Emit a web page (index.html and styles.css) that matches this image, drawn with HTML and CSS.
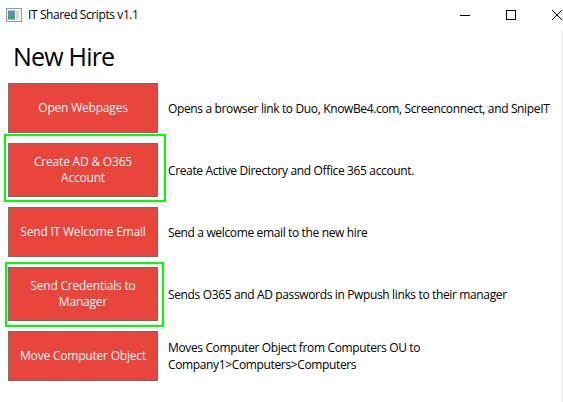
FILE: index.html
```html
<!DOCTYPE html>
<html>
<head>
<meta charset="utf-8">
<link rel="stylesheet" href="styles.css">
</head>
<body>
<div class="window">
  <div class="titlebar">
    <div class="app">
      <svg class="app-icon" width="16" height="14" viewBox="0 0 16 14">
        <defs>
          <linearGradient id="g" x1="0" y1="0" x2="0" y2="1">
            <stop offset="0" stop-color="#5a8fc8"/>
            <stop offset="1" stop-color="#3aa56a"/>
          </linearGradient>
        </defs>
        <rect x="0.5" y="0.5" width="15" height="13" fill="#f4f4f4" stroke="#9a9a9a"/>
        <rect x="2" y="2.5" width="7" height="9" fill="url(#g)"/>
        <rect x="10" y="2.5" width="3" height="9" fill="#d9d9d9"/>
      </svg>
      <span class="app-title">IT Shared Scripts v1.1</span>
    </div>
    <div class="caption">
      <div class="cap-btn">
        <svg width="10" height="10" viewBox="0 0 10 10"><path d="M0 5.5H10" stroke="#000" stroke-width="1"/></svg>
      </div>
      <div class="cap-btn">
        <svg width="10" height="10" viewBox="0 0 10 10"><rect x="0.5" y="0.5" width="9" height="9" fill="none" stroke="#000" stroke-width="1"/></svg>
      </div>
      <div class="cap-btn">
        <svg width="10" height="10" viewBox="0 0 10 10"><path d="M0 0L10 10M10 0L0 10" stroke="#000" stroke-width="1"/></svg>
      </div>
    </div>
  </div>
  <div class="client">
    <h1 class="heading">New Hire</h1>
    <div class="rows">
      <div class="row">
        <div class="btn">Open Webpages</div>
        <div class="desc">Opens a browser link to Duo, KnowBe4.com, Screenconnect, and SnipeIT</div>
      </div>
      <div class="row tall mark-a">
        <div class="btn">Create AD &amp; O365<br>Account</div>
        <div class="desc">Create Active Directory and Office 365 account.</div>
      </div>
      <div class="row">
        <div class="btn">Send IT Welcome Email</div>
        <div class="desc">Send a welcome email to the new hire</div>
      </div>
      <div class="row tall mark-b">
        <div class="btn">Send Credentials to<br>Manager</div>
        <div class="desc">Sends O365 and AD passwords in Pwpush links to their manager</div>
      </div>
      <div class="row">
        <div class="btn">Move Computer Object</div>
        <div class="desc">Moves Computer Object from Computers OU to<br>Company1&gt;Computers&gt;Computers</div>
      </div>
    </div>
    <div class="edge"></div>
  </div>
</div>
</body>
</html>
```
FILE: styles.css
```css
html, body {
  margin: 0;
  padding: 0;
  background: #ffffff;
}
body {
  width: 563px;
  height: 402px;
  overflow: hidden;
  font-family: "Open Sans", "Noto Sans", sans-serif;
  color: #000;
}
.window {
  width: 563px;
  height: 402px;
  display: flex;
  flex-direction: column;
  overflow: hidden;
}
.titlebar {
  height: 30px;
  display: flex;
  align-items: center;
  flex-shrink: 0;
}
.app {
  flex: 1;
  display: flex;
  align-items: center;
  padding-left: 6px;
  gap: 6px;
}
.app-icon {
  display: block;
}
.app-title {
  font-size: 12px;
  letter-spacing: -0.4px;
  line-height: 16px;
}
.caption {
  display: flex;
  flex-shrink: 0;
  width: 138px;
  margin-right: -17px;
  height: 30px;
}
.cap-btn {
  width: 46px;
  height: 30px;
  display: flex;
  align-items: center;
  justify-content: center;
}
.cap-btn svg {
  display: block;
  margin-top: -1px;
}
.client {
  flex: 1;
  position: relative;
}
.heading {
  margin: 0;
  height: 53px;
  padding-left: 13px;
  font-weight: 400;
  font-size: 25px;
  line-height: 53px;
  letter-spacing: -0.8px;
}
.rows {
  display: flex;
  flex-direction: column;
  gap: 10px;
  padding-left: 8px;
}
.row {
  display: flex;
  align-items: center;
  gap: 10px;
  height: 50px;
  position: relative;
}
.row.tall {
  height: 54px;
}
.btn {
  height: 100%;
  box-sizing: border-box;
  width: 150px;
  flex-shrink: 0;
  background: #e8453c;
  border: 1px solid #707070;
  color: #f4f4f4;
  font-size: 12px;
  line-height: 16px;
  letter-spacing: -0.2px;
  display: flex;
  align-items: center;
  justify-content: center;
  text-align: center;
}
.desc {
  font-size: 12px;
  line-height: 17px;
  letter-spacing: -0.36px;
}
.mark-a::before,
.mark-b::before {
  content: "";
  position: absolute;
  border: 2px solid #00ff00;
  pointer-events: none;
}
.mark-a::before {
  left: -4px;
  top: -9px;
  width: 158px;
  height: 64px;
}
.mark-b::before {
  left: -3px;
  top: -5px;
  width: 155px;
  height: 61px;
}
.edge {
  position: absolute;
  right: 0;
  top: 0;
  bottom: 0;
  width: 2px;
  background: #f0f0f0;
}
```
